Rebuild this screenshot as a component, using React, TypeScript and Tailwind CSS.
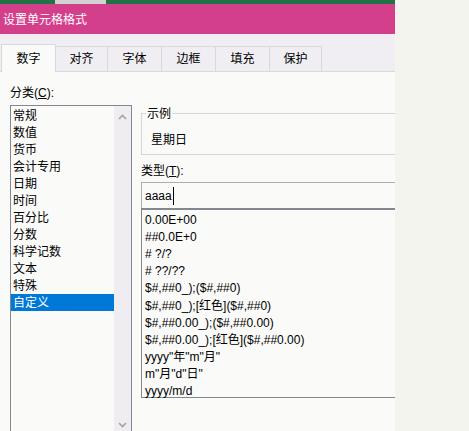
const categories = ["常规", "数值", "货币", "会计专用", "日期", "时间", "百分比", "分数", "科学记数", "文本", "特殊", "自定义"];

const formats = [
  "0.00E+00",
  "##0.0E+0",
  "# ?/?",
  "# ??/??",
  "$#,##0_);($#,##0)",
  "$#,##0_);[红色]($#,##0)",
  "$#,##0.00_);($#,##0.00)",
  "$#,##0.00_);[红色]($#,##0.00)",
  'yyyy"年"m"月"',
  'm"月"d"日"',
  "yyyy/m/d",
];

const tabs = [
  { label: "数字", w: "w-[55px]" },
  { label: "对齐", w: "w-[52px]" },
  { label: "字体", w: "w-[54px]" },
  { label: "边框", w: "w-[54px]" },
  { label: "填充", w: "w-[54px]" },
  { label: "保护", w: "w-[52px]" },
];

function Chevron({ up }: { up?: boolean }) {
  return (
    <svg width="9" height="6" viewBox="0 0 9 6" className="text-[#a3a3a3]">
      <path d={up ? "M1 5 L4.5 1.5 L8 5" : "M1 1 L4.5 4.5 L8 1"} fill="none" stroke="currentColor" strokeWidth="1.6" />
    </svg>
  );
}

export default function App() {
  return (
    <div className="flex h-[431px] w-[469px] overflow-hidden bg-[#f4f4ee] font-['Liberation_Sans','Noto_Sans_CJK_SC',sans-serif] text-[12px] text-black">
      <div className="flex h-full w-[395px] shrink-0 flex-col overflow-hidden bg-[#fafaf8]">
        <div className="flex h-[4px] shrink-0">
          <div className="w-[55px] bg-[#217346]" />
          <div className="w-[51px] bg-[#d2d2d2]" />
          <div className="flex-1 bg-[#217346]" />
        </div>
        <div className="flex h-[30px] shrink-0 items-center bg-[#d43f8c] pl-[3px] pt-[1px] text-[12px] text-white">
          设置单元格格式
        </div>
        <div className="flex h-[38px] shrink-0 items-end bg-[#f0eef2]">
          <div className="flex h-[26px] w-full items-stretch border-b border-[#d9d9d9]">
            <div className="w-[1px]" />
            {tabs.map((t, i) =>
              i === 0 ? (
                <div key={t.label} className={`${t.w} -mb-[1px] -mt-[2px] flex items-center justify-center border border-b-0 border-[#d9d9d9] bg-[#fafaf8] pt-[1px]`}>
                  {t.label}
                </div>
              ) : (
                <div key={t.label} className={`${t.w} flex items-center justify-center border-r border-t border-[#d9d9d9]`}>
                  {t.label}
                </div>
              )
            )}
          </div>
        </div>
        <div className="flex flex-1 gap-[9px] pl-[10px] pt-[14px]">
          <div className="flex w-[122px] shrink-0 flex-col">
            <div className="h-[19px] leading-[14px]">
              分类(<span className="underline">C</span>):
            </div>
            <div className="flex h-[330px] border border-[#828790] bg-[#fafaf8]">
              <div className="flex flex-1 flex-col pt-[1px]">
                {categories.map((c) => (
                  <div
                    key={c}
                    className={`flex h-[17px] items-center pl-[2px] ${c === "自定义" ? "bg-[#0078d7] text-white" : ""}`}
                  >
                    {c}
                  </div>
                ))}
              </div>
              <div className="flex w-[17px] flex-col justify-between bg-[#efedf2] pb-[6px] pt-[8px]">
                <div className="flex justify-center">
                  <Chevron up />
                </div>
                <div className="flex justify-center">
                  <Chevron />
                </div>
              </div>
            </div>
          </div>
          <div className="flex w-[290px] shrink-0 flex-col pt-[27px]">
            <div className="relative h-[42px] border border-[#d5d5d5]">
              <div className="absolute -top-[7px] left-[4px] bg-[#fafaf8] px-[1px] leading-[14px]">示例</div>
              <div className="pl-[9px] pt-[18px] leading-[16px]">星期日</div>
            </div>
            <div className="mt-[9px] h-[18px] leading-[14px]">
              类型(<span className="underline">T</span>):
            </div>
            <div className="flex h-[26px] items-center border-t border-l border-[#abadb3] pl-[3px]">
              <span>aaaa</span>
              <span className="ml-[1px] h-[18px] w-[1px] bg-black" />
            </div>
            <div className="h-[190px] border-l border-b border-t-2 border-[#828790] pl-[3px] pt-[1px]">
              {formats.map((f) => (
                <div key={f} className="flex h-[17.2px] items-center whitespace-nowrap">
                  {f}
                </div>
              ))}
            </div>
          </div>
        </div>
      </div>
      <div className="flex-1" />
    </div>
  );
}
